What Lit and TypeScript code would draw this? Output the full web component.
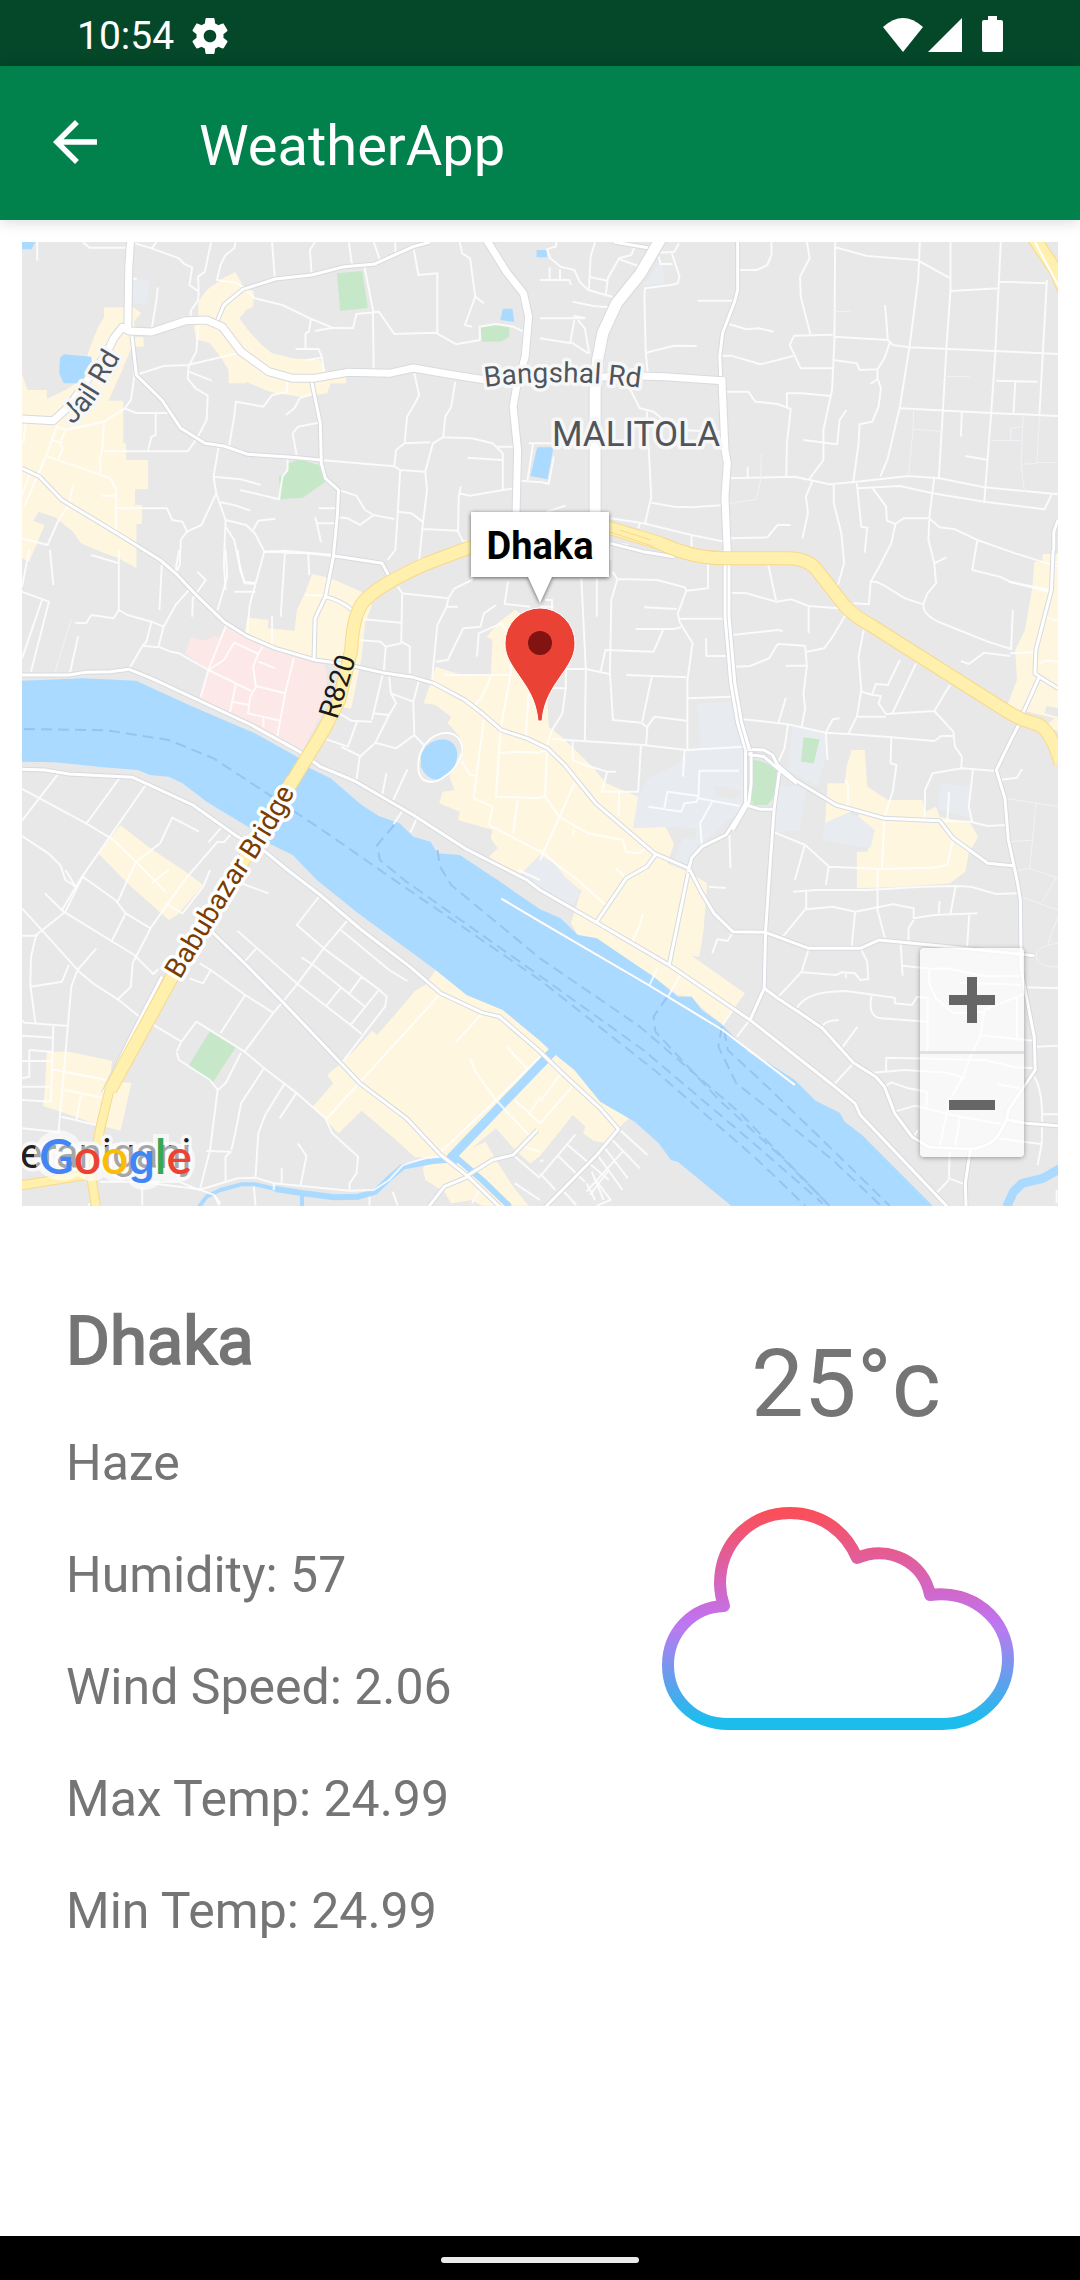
import { LitElement, html, svg, css } from "lit";
import { customElement, property } from "lit/decorators.js";

interface Layer {
  cls: string;
  d: string;
  dx?: number;
  dy?: number;
}

const COL = 1568;
const ROW = 960;

const areas: Layer[] = [
  { cls: "shop", d: "M302 232H388L410 250 390 272V322H417V350H383L355 420 315 512H358V640H366V690H430V778H392V825H412V882H396V1015L345 985 300 968 235 940 212 905 160 862 112 845 96 872 130 885 105 945 85 995 64 985V432L80 480H136V507L190 480 250 440 255 370 285 290 302 262Z" },
  { cls: "shop", d: "M576 215L600 180 650 143 684 126 704 165 738 185 735 230 715 240 695 265 720 300 760 345 790 370 850 385 930 390 950 430 1005 440V460H960L950 490 880 502 840 495 800 490 770 480 715 455 714 460H664V420L640 380 610 340 570 328 562 288 576 270Z" },
  { cls: "water", d: "M64 36H102L92 58H64ZM185 373L265 380 268 410 250 460H185L172 430 174 385ZM1460 236H1488L1493 276 1453 270ZM1558 60H1588V82H1558ZM1560 652H1607L1590 748 1540 738Z" },
  { cls: "campus", d: "M386 148H432L428 222H386ZM1923 90L1930 160 1868 165Z" },
  { cls: "park", d: "M978 130L1052 123 1068 234 988 243ZM1395 290L1440 284 1480 290 1478 320 1455 335 1400 335ZM838 700L870 688 925 705 945 755 880 803 815 808 810 740 835 725Z" },
  { cls: "clinic", dy: ROW, d: "M655 230L720 265 850 320 945 345 950 400 930 500 880 600 800 560 700 510 583 445 605 360 537 310 555 262 595 272 622 258 635 265Z" },
  { cls: "shop", dy: ROW, d: "M907 72L960 85 1050 125 1080 165 1060 220 1050 320 1020 475 980 470 985 345 915 325 850 315 780 285 712 245 718 202 780 210 778 235 855 242 862 180 885 130Z" },
  { cls: "shop", d: "M1265 1310L1340 1335 1425 1338 1430 1230 1413 1220 1450 1175 1495 1140 1560 1180 1590 1410 1593 1490 1630 1520 1720 1610 1760 1660 1853 1700 1843 1785 1933 1790 1958 1840 1938 1900 1998 1925 2053 1960 2043 2100 2031 2180 2008 2177 2163 2290 2098 2383 2038 2335 2008 2300 1968 2295 1898 2240 1768 2155 1733 2125 1678 2115 1658 2080 1688 1980 1568 1935 1505 1945 1420 1880 1445 1855 1425 1825 1430 1800 1330 1770 1335 1745 1275 1720 1285 1685 1320 1680 1305 1640 1340 1560 1335 1520 1300 1480 1310 1460 1265 1425 1230 1420 1250 1360Z" },
  { cls: "campus", d: "M1568 1875L1610 1900 1640 1940 1690 1985 1660 2025 1568 1980 1500 1945Z" },
  { cls: "shop", d: "M350 1785L430 1850 545 1930 590 1965 515 2055 490 2070 375 1965 285 1870Z" },
  { cls: "shop", dy: ROW * 2, d: "M136 545H200L325 572 320 635 382 638 350 782 285 765 220 740 125 708 130 660Z" },
  { cls: "shop", dy: ROW * 2, d: "M1265 300L1235 345 1205 362 1175 400 1095 495 1080 482 1035 535 995 575 950 615 968 640 908 710 983 790 1050 722 1150 810 1205 862 1250 865 1228 895 1235 930 1290 965 1310 1000 1370 990 1400 1007H1535L1490 950 1440 870 1410 815 1370 835 1440 775 1500 845 1540 880 1568 858 1640 765 1663 735 1700 770 1693 790 1723 812 1753 818 1830 740 1743 695 1668 600 1600 545 1568 512 1460 420 1355 375Z" },
  { cls: "park", dy: ROW * 2, d: "M610 483L685 532 618 637 547 588Z" },
  { cls: "shop", dx: COL, dy: ROW, d: "M1460 12H1504V545L1470 525 1495 505 1355 470 1385 390 1380 300 1408 240 1430 110 1435 35 1458 34Z" },
  { cls: "shop", dx: COL, dy: ROW, d: "M905 600H943L950 710 1010 750 1110 750 1120 785 1150 770 1160 800 1250 820 1272 860 1245 910 1235 965 1190 1000 1040 1010 920 1015V905H950L970 840 925 825V780L890 790V820H828L835 700H885L890 650Z" },
  { cls: "campus", dx: COL, dy: ROW, d: "M457 460L553 457 575 520 590 590 600 760 560 800 490 862 470 880 440 930 430 960 385 945 420 850 400 830 270 835 285 740 315 685 405 640 422 600 468 595ZM735 530L830 550 832 620 805 708 718 660ZM690 708H772L755 840 682 845ZM825 820L890 790 925 800 972 840 960 893 900 885 822 870ZM1165 700L1248 710V805L1155 775Z" },
  { cls: "park", dx: COL, dy: ROW, d: "M765 562L812 568 795 640 758 635ZM617 630Q650 630 688 660L680 740 660 765 620 765 612 740Z" },
  { cls: "land", dx: COL, dy: ROW, d: "M1470 468L1504 475V500L1466 490ZM505 710L545 712 590 725 560 750 510 735ZM365 830L400 832 455 835 450 870 410 860 385 900 388 880Z" },
  { cls: "water", d: "M64 1352L240 1345 395 1352 560 1430 740 1510 870 1585 900 1615 960 1645 1050 1725 1100 1758 1160 1780 1200 1820 1250 1835 1270 1870 1335 1875 1445 1950 1568 2038 1628 2065 1678 2115 1733 2125 1898 2240 1968 2300 2008 2300 2038 2340 2098 2385 2178 2470 2218 2490 2308 2550 2368 2612 2438 2648 2453 2675 2503 2715 2708 2927H2123L1968 2795 1948 2790 1913 2740 1843 2675 1743 2615 1668 2520 1603 2465 1568 2432 1460 2340 1355 2295 1265 2220 1040 2050 920 1950 850 1875 780 1840 720 1790 600 1715 530 1660 490 1640 435 1635 400 1620 300 1612 160 1597 64 1595Z" },
  { cls: "water", dy: ROW, d: "M1222 620Q1235 570 1290 568 1328 575 1328 620 1320 668 1285 685 1245 700 1222 650Z" },
];

const canals: Layer[] = [
  { cls: "canal-wide", dy: ROW * 2, d: "M1605 545L1310 862L1330 875" },
  { cls: "canal", dy: ROW * 2, d: "M1310 850L1400 930 1480 1010M1320 868L1265 872 1170 890 1130 925 1090 965 1040 980 970 982 880 970 800 957" },
  { cls: "canal-thin", dy: ROW * 2, d: "M800 957L740 943H700L640 960 600 980 578 1010M877 970V1008" },
  { cls: "canal-wide", dx: COL, dy: ROW * 2, d: "M1515 893L1460 925 1400 940 1375 965 1355 1010" },
];

const ferries: Layer[] = [
  { cls: "ferry", d: "M70 1497L310 1501 490 1530 620 1585 790 1700 950 1810 1110 1925 1568 2250 1900 2520 2200 2790 2338 2927" },
  { cls: "ferry", d: "M1145 1785L1095 1845 1103 1890 1180 1955 1568 2238 1868 2460 2200 2750 2388 2920" },
  { cls: "ferry", d: "M1270 1860L1278 1910 1310 1965 1568 2185 1858 2390 2150 2650 2408 2927" },
  { cls: "ferry", dx: COL, dy: ROW * 2, d: "M370 380L330 440 335 485 520 690 700 860 840 1007M528 470L518 530 570 640 700 745 850 870 990 1007M535 480L545 540 660 650 830 820 1015 1007" },
];

const lanes: Layer[] = [
  { cls: "lane", d: "M108 36V92M240 36L260 53H375M455 36L440 55M392 40L440 55 520 85 535 102 558 112 550 165 577 185 575 212 555 240 553 262M613 36L595 125 575 140 577 185M684 36L680 55 655 75 640 105 630 150 690 160 740 205 820 225 900 265 965 293 1025 295 1035 252 1100 245 1145 312 1265 308 1325 343 1393 330V290L1440 282 1490 290 1530 310M790 36L798 145M915 36L900 60 905 133M1013 36L1022 105M1085 36L1105 95M1148 36V75M1200 50L1215 135 1270 130V308M1335 36L1342 70 1365 85 1380 200 1350 285 1370 290M1380 200L1405 220M1058 110L1083 240 1085 425M903 265L897 305 887 310V355M858 357H925L935 382 940 425M890 390L935 383M915 303L965 293" },
  { cls: "lane", d: "M458 172L455 205 440 300M380 146H397M577 280L570 365 548 408 545 445 568 475 603 497 600 570 572 625 545 664H300M400 433L475 408 545 405 690 370M548 425L615 452M385 320L390 440 380 510 362 535 302 575 190 600 165 590 135 675 70 830M362 535L395 549H490M452 549V615L440 620 430 660M302 575L297 655 290 690 292 730M140 680L280 730 320 745 337 780V905M295 797H337M75 575L68 640M212 765L200 825 170 870 138 945 64 925M85 735L64 795M190 600L175 640 182 655 170 685M150 628L178 640M340 835H485L500 870 530 875 543 905" },
  { cls: "lane", d: "M635 650L620 740 628 790 585 885 543 905 525 930 522 1005 510 1030M620 740L700 748 757 765M628 790L655 870 650 1000 655 1080M640 817L680 825 727 842M655 870L715 885 740 910 768 965 825 962 970 975M735 900L750 872 800 866M655 890L680 930 692 990 710 1060 740 1062M697 780L810 808 820 740 835 720V685M835 452L833 485 790 495 765 530 685 515 680 560 665 650M910 490L870 505 855 535 830 555M925 578L865 590 850 610 862 680M930 690L1145 709 1162 720 1235 725 1257 640 1285 622 1370 625 1430 640 1460 670V780L1365 797 1332 790M1357 683L1458 690M1145 709L1150 660 1175 640 1250 637M1203 430L1217 495 1205 520 1182 560 1175 640M1322 455L1310 530 1293 560 1287 622M1460 780L1498 775M1235 725L1240 780 1228 880 1217 990M1162 720L1155 850 1148 960 1125 990M983 780L1035 797 1060 840 1085 855 1145 867M980 862L1010 865 1045 885 1085 855M1155 845L1195 850 1230 877M1228 897L1330 902M1338 770L1332 800 1330 905 1345 935 1370 930M925 835H980M915 862L920 880H975M920 880L932 937M1445 650H1498M1535 640L1568 640M1512 752L1568 757M1548 640L1532 750" },
  { cls: "lane", dx: COL, d: "M48 36L45 50 20 58 30 85 60 110 100 120 115 155 140 180 210 200M160 36L147 80 142 180M0 150H85L90 165M28 112V150M58 118V150M142 140L195 152M190 200L197 145 230 85 265 75 275 50M232 88L285 108M95 215L155 228 200 232M0 265H130M97 258L132 264M100 270L88 335 140 370M110 270L130 295 143 370M0 325L90 340M403 40L390 65 350 68M345 80L350 102H385M383 70L405 140 400 160 380 165 305 175 303 200 307 365 313 430M307 368L390 347 455 348M262 478L290 535 330 545 370 580 400 600 525 605M310 545L323 800 305 880M323 818L390 830 440 832 525 826M0 640H45M0 755L25 762 40 680M20 845L75 827" },
  { cls: "lane", dx: COL, d: "M672 36V75L660 105 630 120H580M458 212H565M550 283L600 298 635 295 678 305M775 36L783 85 755 140 757 200 785 312M857 36L855 330 848 480 823 600V690L780 750M857 52L950 78 1095 90 1192 145M1103 36L1098 150 1073 350 1045 530 1010 685 988 740M1192 36V180L1180 355 1170 540 1158 745M1192 183L1332 175M1338 36L1322 370 1310 550 1290 815M1335 155L1470 160M1472 150L1460 370 1450 555M855 320L1010 330 1025 345 1073 352 1320 363 1504 372M1002 225L1010 330M850 314L738 317 725 345 757 415H850M525 377H555L640 403 735 378M852 390L920 400 928 420 980 418 1000 385 1015 340M980 418V445L990 475 983 530 965 575 928 583 925 640 910 755M960 462L980 447M540 485H605L625 515 690 522 728 537 717 640 715 740M717 530V490L760 490 845 498M765 630L863 643 870 570 890 540M1045 535L1310 549 1504 558M1225 545L1222 620M1235 678L1302 690M1325 452L1445 455M1380 453L1375 550" },
  { cls: "lane", dx: COL, d: "M545 745L740 740 840 763 920 755 1070 738 1160 745 1290 772 1504 793M603 710V742M790 755L772 800 778 850 762 925M853 762V820L875 910 883 1000 865 1065M920 760L933 890 950 893 943 968M922 775L1045 768 1140 790 1290 815 1465 838 1485 795M965 773L1005 830 1007 872 1032 882 1020 940 985 1010 960 1055M1032 882L1055 865H1130L1145 740M1130 865L1160 892 1205 898 1270 930 1380 970 1504 1010M1130 870L1128 930 1145 1000M1270 930L1255 1020 1335 1040 1365 1055 1480 1080M550 925L660 922 690 885H728M205 865L300 880 440 915 535 935M440 915V950M285 895L290 880M205 940V990M205 938L256 945" },
  { cls: "lane-faint", dx: COL, d: "M853 245H900M1175 440H1247M1085 537L1083 600 1070 740M1083 597L1168 605M643 672L640 755 628 808 540 822M1403 558L1397 705 1407 785M1310 632H1397M1367 632V595L1400 590M1450 560L1443 700 1400 703M1443 698H1500" },
  { cls: "lane", dy: ROW, d: "M265 15L345 40M345 0V180L370 195 440 215 475 230 510 165 548 120M345 180L330 205 265 195 250 220 218 218M440 215L425 275 412 290 375 357M475 230L460 290 495 305 520 310 605 360 730 423M412 287L460 292M470 40L463 180M520 0L510 60M573 65L597 90 560 145 558 200M64 125L142 155 90 365M122 150L64 325M227 258L203 370M145 0L155 105M85 0L64 110M655 0L660 80 632 180M690 0L697 60 710 95 745 100M680 125H742M768 3L725 165 718 250M828 0L815 200M765 5L895 10 1110 35M895 10L898 75M790 198V285M885 135L945 137M1155 110L1168 130 1165 275 1190 290V370M1165 130L1302 145 1297 170 1270 225 1257 360 1255 390M1302 145L1320 115 1370 90V0M1297 170H1330M1055 208L1165 218M1043 270L1105 275 1120 290 1115 360M1120 290L1165 280" },
  { cls: "lane", dy: ROW, d: "M1113 365L1080 510M1130 380L1135 430 1200 455 1217 390M1135 430L1150 460 1130 495 1090 578 1045 620M1082 490L1130 495M985 490L1020 512 1080 515M1038 512L1010 590 940 565M990 590L1045 618 1035 690M1200 455L1203 555 1230 585M1090 578L1150 595 1203 555M1265 335L1300 330 1345 235 1395 230 1405 190 1440 165M1465 165L1475 95M1465 162L1540 170M1385 320L1390 250 1455 220 1485 260 1483 370 1453 540M1290 375L1483 375M1425 380L1400 440 1375 470M1340 635L1365 675 1385 678M1405 510L1375 745 1430 770 1420 825 1568 905M1453 545L1440 740 1568 745M1450 610L1495 605 1568 608M1535 430L1527 555M1503 750L1490 850M1183 658L1142 750M1122 670L1110 735M1170 780L1143 822M1210 805L1192 847" },
  { cls: "lane", dy: ROW, d: "M657 225L605 360 583 440M605 360L650 330 680 278 750 312 762 290M750 312L735 350 743 410 727 440 720 490 815 512M743 408L828 430M853 325L828 430 805 560M685 402L667 490M675 455L722 465M765 500V530M750 335L800 355M64 717L250 820 330 870 395 935 480 1025M170 670L64 812M350 680L250 822M423 705L235 985 180 1080M64 858L140 910 175 945 190 990 220 1010M578 845L500 803 465 880 395 935 370 990 340 1060M605 877L645 830M672 850L650 877 632 875 540 985 440 1130 385 1240 380 1310 340 1350M780 1030L700 1000" },
  { cls: "lane-faint", dy: ROW, d: "M207 207L160 365" },
  { cls: "lane", dy: ROW * 2, d: "M240 20L190 125 105 195 90 260 88 345 103 460M130 70L185 125 390 255 445 312 460 298M64 115L130 190 230 305 270 340 345 390 405 440M64 197H110M280 235L225 300 207 350 197 470 170 785M88 350L180 335 200 285M190 0L220 50M240 20L335 90 365 130 437 175M365 130L325 212M64 450L70 458 200 468M155 465L148 695 64 690M64 497L155 503M64 573H148M85 540V620L64 625M85 540L150 545M64 650H145M150 598L310 630M188 660L300 683M235 675L222 750M178 740L280 765M64 775L175 787M438 460L527 515M610 0L590 50 530 130 480 100M490 0L440 40M550 325L590 340 612 300 580 280M612 300L712 375 793 428M712 375L640 490M690 183L865 343 1018 465 1050 492M743 237L710 275M875 262L910 285 1060 410M1050 320L1015 370M990 353L947 408M930 75L862 165 940 235 1100 358 1123 380 1118 410 995 575M1100 360L1018 465M1010 150L940 235 865 340 793 430 710 545M990 180L1130 300 1183 333M640 1000L622 975 578 958 405 935" },
  { cls: "lane", dy: ROW * 2, d: "M513 545L527 515 570 455 710 545 770 597 860 668 945 745 965 790 1040 860 1035 910 1015 940V962M513 548L520 570 610 630 632 660 625 715 610 840 580 960M700 548L655 640 632 660M765 597L700 700 685 780 672 840M825 643L770 735 750 790 742 920M860 670L812 745M290 935L520 935 578 960 690 925 742 923 795 940 1015 962 1085 960 1130 930 1170 885 1240 863 1280 860M600 843L670 845 655 860V935M865 820L890 858 873 945M818 895V938M795 940V960M737 950L742 1007M622 975L637 1007M1073 980V1007M1140 965L1155 1007M413 950V1007M255 1007L268 995M945 750L1280 370M1280 845L1440 690 1568 560M1400 430L1323 517M1365 565L1380 605 1440 690 1540 800M1470 530L1530 595M1495 690L1568 760M1568 845L1520 830M1490 855L1568 925M1495 940L1568 990M1365 930L1393 960 1370 1000M1568 680L1535 735M1505 0L1568 30" },
  { cls: "lane", dx: COL, dy: ROW, d: "M488 30V115L425 122 420 112 340 90 225 87 207 150 203 370 212 510 295 518 310 532 333 500 425 512M225 87L210 65M425 122L400 190 405 215 443 280 428 390V600M303 172L398 177M400 206H540M277 237H390L410 232M357 240L330 305 190 300 175 370M482 265L483 318H545M120 85L133 360 130 575M165 85L165 200M30 357H133L205 373M250 375L425 382M325 378L297 515M430 445L555 440M35 567L300 585 425 600 590 590M312 530L308 585M293 587L285 725 180 725 195 665 130 645 95 630V570M195 665H220M420 600L415 680M0 415H75L75 360M75 415L65 490 35 540 20 590M230 725L228 795M460 745L463 662H578M315 770L410 785 420 760 455 755 460 738 370 725 360 780M500 755L465 820 470 885M460 745L580 768M550 855L553 955" },
  { cls: "lane", dx: COL, dy: ROW, d: "M100 700L0 930M0 605L20 600 15 740 55 800 140 850 240 870 250 905 290 910 310 890M15 150H35V185M0 170H40M95 855L100 840M10 705H15M0 740H15M555 128L600 130 685 155 730 148 780 168 865 175M663 45L685 150M780 168V250M887 195L850 260 825 295 775 305M558 255L690 240 705 243M565 350L610 348 665 325 690 282 770 287 775 350 765 430 770 475 760 530M714 347H775M585 507L720 523 830 548 895 552 1020 562 1145 573 1165 558H1200M714 443L693 517M720 523L710 595 690 640M830 548L835 630M830 548L850 508 870 505M940 240L925 320 933 420 920 500 895 552M933 425L965 435 990 438 983 460 1005 492 1145 483 1190 405M965 432L975 402 1010 405 1045 330M920 500H1005M1092 340L1023 490M1145 483L1200 545 1205 590 1225 620 1223 655M910 160L955 163 960 95H975L1005 110 1060 145 1113 163 1125 130 1150 100 1145 40 1180 22M1113 163Q1110 200 1180 225L1300 275 1368 297 1373 180M1365 318L1290 308 1245 342 1222 333M1365 310L1437 307M1450 340L1470 332 1504 335M1360 95L1480 125M1465 200L1504 213M1490 35L1504 38" },
  { cls: "lane", dx: COL, dy: ROW, d: "M1020 562L1018 640 1035 645 1025 720 1000 805 993 955M887 690L895 710 893 768M1117 808L1118 720 1140 670 1225 655 1325 663M1257 660L1245 770 1255 815M1330 690L1385 683 1400 657M1188 725L1183 810M1160 812L1250 815 1300 828 1352 825M1200 865L1183 945 1140 953 993 957 840 950 770 885 680 847M768 888L740 990M838 952L830 1005M980 957V1080L1003 1170M735 1025L800 1020 950 1020 1110 1010 1207 1008 1250 1010 1325 1032 1390 1030M0 900L50 945 110 990 190 1065M220 955L250 985" },
  { cls: "lane-faint", dx: COL, dy: ROW, d: "M1352 745L1504 770M1440 760L1422 955M1365 875L1430 870M1385 962L1420 955 1504 985M1395 1040L1504 1080M1500 980L1460 1055M1504 1180Q1440 1185 1440 1220 1445 1250 1504 1252M1475 1180L1504 1100" },
  { cls: "lane", dx: COL, dy: ROW * 2, d: "M490 50L540 54M560 187L545 213 515 208 500 250M773 65V115L705 200M773 118L850 110 915 125 1025 103 1085 115V145L1145 135 1270 130M915 125L905 230M1085 150L1070 175V215M1160 93L1158 130M1207 48L1192 130M1247 130L1240 230M780 238L760 305 690 383M760 307L860 315 875 307 915 310 930 330 953 327 950 275 933 240M1047 218L1053 317M1053 287L1140 297 1180 295 1290 318H1400M888 310V325M745 415Q770 370 850 365L890 363 1030 383V400L1080 405 1095 380 1130 385M963 375Q950 440 990 445L1125 455M1130 300V340L1150 385 1200 430 1290 425M1125 390V550M818 470Q830 450 868 450M922 470L878 532M910 580L852 645M1005 605V563L1290 570 1380 592 1440 595M965 608L1060 600 1180 608 1235 625M1225 630L1250 560 1280 495 1290 420 1410 370M1280 495L1435 513M1410 352L1504 355M1440 530L1504 527M1000 650L1020 637 1070 655 1125 665 1122 710M1225 625L1190 690 1160 830M1030 725L1090 707 1220 740 1355 765M1220 740L1205 830M1325 805L1460 823M1435 620Q1460 660 1458 760L1457 820 1445 885M1460 733H1504M1190 845L1187 925 1235 943M1187 930L1150 970M1085 800L1097 780M1500 960V1000M1218 338L1400 345M1330 643L1395 655M1385 380V510" },
  { cls: "lane", dx: COL, dy: ROW * 2, d: "M298 132L290 165 268 213M340 297L318 345M407 315L373 378M560 420L530 465M605 455L572 500M60 612L0 695M93 650L0 760M230 778L312 855M210 810L290 895M185 830L255 925M170 860L240 960M150 905L185 990M135 940L160 990M165 1007L205 990 165 935M65 960L105 1005M0 910L45 960M50 855L130 935M77 822L200 930M103 793L0 920M240 845L135 965M200 900L145 975M0 875L10 870" },
];

const streets: Layer[] = [
  { cls: "street", d: "M630 275L650 225 705 178 800 147 905 135 1000 110 1085 103 1200 50 1250 36M1783 36L1890 55M905 455L930 580 933 700 945 745 983 780 980 850 968 980 945 1100 915 1165 912 1285M383 315L396 435 470 510 525 595 595 640 650 648 720 673 850 682 930 690M945 1100Q990 1110 1022 1140M968 977L1110 1000 1130 1040M64 715L115 740 180 810 340 910 465 990 510 1030 570 1095 650 1175 720 1220 800 1255 915 1290 1000 1302 1110 1328 1200 1342 1260 1360 1350 1410 1400 1450 1455 1500 1530 1525 1590 1555 1640 1605 1730 1720 1900 1870 2000 1915" },
  { cls: "street", d: "M64 1335H200L250 1327 320 1325 375 1318 440 1345 730 1485 870 1565 930 1610 1030 1653 1200 1755 1350 1855 1530 1950 1568 1980 1728 2075 1943 2205 2178 2370 2418 2565 2483 2620 2498 2655 2755 2935M64 1618L130 1620 200 1632 385 1642 430 1663 560 1725 690 1820 770 1865 835 1920 930 1995 1050 2100 1190 2210 1280 2290 1400 2348 1450 2360 1568 2465 1633 2530 1743 2635 1796 2698 1733 2775 1580 2935M580 2070L720 2210 820 2315 1045 2560 1180 2665 1280 2775 1360 2840 1450 2930M1360 2840L1290 2870 1245 2930M1360 2835L1430 2790 1490 2775 1560 2700M300 2590L400 2380 470 2240" },
  { cls: "street", dx: COL, d: "M574 36V180L565 215 530 310 522 380 525 450M205 940L300 965 390 980M1504 870L1492 905V960" },
  { cls: "street", dx: COL, dy: ROW, d: "M597 590V760L575 800 540 855 470 890 440 925 430 965M613 605V700L607 755 560 840M600 598L650 600 675 615 690 645 740 690 860 765 1000 805 1160 812 1200 865 1300 940 1380 948M605 612L650 620 690 655 745 700M695 665L680 775 665 990 655 1145 651 1315M600 765L640 778H675M335 915L310 950 250 985 165 1115M1490 0L1485 120 1440 300 1437 370 1450 380 1504 415M1450 380L1400 495M1390 525L1365 575 1325 660 1350 745 1360 870 1385 990 1395 1050 1397 1260 1435 1460 1438 1560 1360 1680 1355 1710 1325 1765Q1290 1795 1250 1797L1130 1792 1080 1760 1030 1690 1000 1610 975 1580 910 1538 820 1435 750 1385 690 1345 651 1315 610 1410M1250 1797L1235 1900 1237 1970M1360 1710L1410 1720 1504 1727M435 960L470 1030 505 1090 560 1145 655 1147 780 1195H930L985 1170 1200 1192 1435 1217M430 970L375 1245" },
  { cls: "ring", dy: ROW, d: "M1232 585Q1260 548 1300 548 1345 555 1343 610 1325 660 1290 680 1260 705 1230 690 1205 670 1220 610Z" },
  { cls: "pier", dx: COL, dy: ROW * 2, d: "M-112 86L0 155 315 345 530 480 740 645" },
];

const roads: Layer[] = [
  { cls: "road", d: "M380 20L374 110 371 300M64 567L155 572 200 530 260 440 310 370 330 325 355 292 375 303 440 306 540 272 600 270 645 290 700 365 780 425 850 445 910 445 1010 427 1130 430 1200 414 1300 432 1410 450 1858 438 1930 440 2098 452M1410 25L1470 125 1520 190 1535 260 1525 380 1500 470 1490 530 1503 660 1498 870M2096 442L2105 660 2112 700 2105 800 2112 970" },
  { cls: "road", dx: COL, dy: ROW, d: "M543 0V200L560 400 580 520 603 600" },
  { cls: "avenue", d: "M1922 20L1860 130 1790 220 1750 310 1735 390 1728 480V870" },
];

const highways: Layer[] = [
  { cls: "highway", d: "M840 1670L940 1500 985 1410 1020 1260Q1025 1140 1065 1105 1110 1060 1240 1000L1370 950Q1568 850 1768 893L1918 940Q2010 985 2108 985H2288Q2340 985 2368 1015L2455 1130Q2490 1165 2528 1185L2918 1440Q2940 1455 2968 1468L3018 1485Q3055 1510 3080 1600" },
  { cls: "highway", d: "M850 1650L500 2240 320 2580" },
  { cls: "highway-slim", d: "M320 2570L290 2700 265 2840 280 2940M50 2868L250 2835" },
  { cls: "highway", dx: COL, d: "M1425 10L1500 125 1530 200" },
];

const place = (l: Layer) =>
  svg`<path class=${l.cls} d=${l.d} transform="translate(${l.dx ?? 0} ${l.dy ?? 0})"></path>`;

const cased = (layers: Layer[]) => svg`
  <g class="casing">${layers.map(place)}</g>
  <g>${layers.map(place)}</g>`;

@customElement("status-bar")
class StatusBar extends LitElement {
  static styles = css`
    :host {
      display: flex;
      align-items: center;
      height: 66px;
      padding: 0 77px;
      background: #044729;
      color: #fff;
      font-size: 39px;
      line-height: 44px;
    }
    .time { margin-right: 18px; padding-top: 6px; }
    .gear { width: 36px; height: 36px; margin-top: 5px; }
    .signals { width: 120px; height: 38px; margin-left: auto; margin-top: 4px; }
  `;
  render() {
    return html`
      <span class="time">10:54</span>
      <svg class="gear" viewBox="2 2 20 20" fill="#fff" aria-hidden="true">
        <path d="M19.43 12.98c.04-.32.07-.64.07-.98s-.03-.66-.07-.98l2.11-1.65c.19-.15.24-.42.12-.64l-2-3.46c-.12-.22-.39-.3-.61-.22l-2.49 1c-.52-.4-1.08-.73-1.69-.98l-.38-2.65C14.46 2.18 14.25 2 14 2h-4c-.25 0-.46.18-.49.42l-.38 2.65c-.61.25-1.17.59-1.69.98l-2.49-1c-.23-.09-.49 0-.61.22l-2 3.46c-.13.22-.07.49.12.64l2.11 1.65c-.04.32-.07.65-.07.98s.03.66.07.98l-2.11 1.65c-.19.15-.24.42-.12.64l2 3.46c.12.22.39.3.61.22l2.49-1c.52.4 1.08.73 1.69.98l.38 2.65c.03.24.24.42.49.42h4c.25 0 .46-.18.49-.42l.38-2.65c.61-.25 1.17-.59 1.69-.98l2.49 1c.23.09.49 0 .61-.22l2-3.46c.12-.22.07-.49-.12-.64l-2.11-1.65zM12 15.5c-1.93 0-3.5-1.57-3.5-3.5s1.57-3.5 3.5-3.5 3.5 1.57 3.5 3.5-1.57 3.5-3.5 3.5z"></path>
      </svg>
      <svg class="signals" viewBox="0 0 120 38" fill="#fff" aria-hidden="true">
        <path d="M0 11Q20-7 40 11L20 36Z"></path>
        <path d="M79 2V36H45Z"></path>
        <path d="M105 0h9v4h4a2 2 0 0 1 2 2v28a2 2 0 0 1-2 2h-17a2 2 0 0 1-2-2V6a2 2 0 0 1 2-2h4z"></path>
      </svg>
    `;
  }
}

@customElement("city-map")
class CityMap extends LitElement {
  static styles = css`
    :host { display: block; position: relative; }
    .map { display: block; width: 100%; height: auto; background: #e8e8e8; }
    .sheet path { vector-effect: non-scaling-stroke; fill: none; stroke-linejoin: round; }
    .sheet .shop { fill: #fef6df; }
    .sheet .water { fill: #aadaff; }
    .sheet .park { fill: #c6e8c8; }
    .sheet .campus { fill: #e8ecf0; }
    .sheet .clinic { fill: #fce8e6; }
    .sheet .land { fill: #e8e8e8; }
    .canal { stroke: #aadaff; stroke-width: 6px; }
    .canal-thin { stroke: #aadaff; stroke-width: 4px; }
    .canal-wide { stroke: #aadaff; stroke-width: 9px; }
    .ferry { stroke: #97c3f1; stroke-width: 2px; stroke-dasharray: 11 6; }
    .lane { stroke: #fff; stroke-width: 2px; stroke-opacity: 0.8; }
    .lane-faint { stroke: #f0f3f7; stroke-width: 1px; }
    .street { stroke: #fff; stroke-width: 3px; }
    .pier { stroke: #fff; stroke-width: 2px; }
    .ring { stroke: #fff; stroke-width: 2px; }
    .road { stroke: #fff; stroke-width: 7px; }
    .avenue { stroke: #fff; stroke-width: 11px; }
    .highway { stroke: #fff0ae; stroke-width: 12px; }
    .highway-slim { stroke: #fff0ae; stroke-width: 8px; }
    .casing path { stroke: #d7dade; }
    .casing .street { stroke-width: 5px; }
    .casing .ring, .casing .pier { stroke-width: 2px; }
    .casing .road { stroke-width: 9px; }
    .casing .avenue { stroke-width: 13px; }
    .casing .highway { stroke: #f9d98a; stroke-width: 14px; }
    .casing .highway-slim { stroke: #f9d98a; stroke-width: 10px; }
    .lane-center { stroke: #fff; stroke-width: 2px; }
    .split { stroke: #d7dade; stroke-width: 1px; }
    .median { stroke: #f9d98a; stroke-width: 1px; }
    text { font-family: Roboto, "Liberation Sans", sans-serif; }
    .label {
      font-size: 28px;
      fill: #50555c;
      stroke: #f7f7f7;
      stroke-width: 7px;
      stroke-linejoin: round;
      paint-order: stroke;
    }
    .district { font-size: 35px; }
    .bridge { fill: #7a3c00; stroke: #fff; }
    .route { fill: #1a1a1a; stroke: none; }
    .town { font-size: 42px; fill: #202124; }
    .callout-text { font-size: 38px; font-weight: 700; fill: #000; }
    .callout { fill: #fff; filter: drop-shadow(0 1px 2px rgba(0, 0, 0, 0.6)); }
    .logo { font-family: Lato, Inter, sans-serif; font-size: 48px; font-weight: 600; }
    .logo-g { font-family: Inter, sans-serif; font-size: 42px; font-weight: 600; }
    .halo { fill: #fff; opacity: 0.6; }
    .blue { fill: #4285f4; }
    .red { fill: #ea4335; }
    .amber { fill: #fbbc05; }
    .green { fill: #34a853; }
    .zoom {
      position: absolute;
      right: 34px;
      bottom: 49px;
      width: 104px;
      background: rgba(255, 255, 255, 0.7);
      border-radius: 4px;
      box-shadow: 0 1px 5px rgba(0, 0, 0, 0.35);
    }
    .zoom button {
      display: flex;
      align-items: center;
      justify-content: center;
      width: 100%;
      height: 103px;
      padding: 0;
      border: 0;
      background: none;
    }
    .zoom button + button { border-top: 3px solid rgba(215, 215, 215, 0.7); height: 106px; }
    .zoom svg { width: 46px; height: 46px; }
  `;

  render() {
    return html`
      <svg class="map" viewBox="22 242 1036 964" role="img" aria-label="Map of Dhaka">
        <defs>
          <path id="bangshal" d="M485 387Q560 377 642 388"></path>
          <path id="jail" d="M72 425Q94 406 104 385L127 346"></path>
          <path id="bridge" d="M180 980L238 884Q273 836 299 784"></path>
        </defs>
        <g class="sheet" transform="translate(0 230) scale(0.34439 0.33333)">
          ${areas.map(place)} ${canals.map(place)} ${ferries.map(place)}
          ${lanes.map(place)} ${cased(streets)} ${cased(roads)}
          <path class="split" d="M2111 1000V1160L2128 1360 2148 1480 2170 1560"></path>
          ${cased(highways)}
          <path class="median" d="M1768 905L1900 950M1800 900L1890 930"></path>
          <path class="lane-center" d="M3005 36L3072 165"></path>
        </g>
        <text class="label"><textPath href="#bangshal">Bangshal Rd</textPath></text>
        <text class="label district" x="552" y="446">MALITOLA</text>
        <text class="label"><textPath href="#jail">Jail Rd</textPath></text>
        <text class="label route" x="337" y="720" transform="rotate(-73 337 720)">R820</text>
        <text class="label bridge"><textPath href="#bridge">Babubazar Bridge</textPath></text>
        <text class="label town" x="20" y="1168">eraniganj</text>
        <g class="halo">
          <path d="M34 1155A25 25 0 0 1 76 1137L82 1146Q92 1140 104 1148 118 1138 130 1147 140 1140 153 1144V1134H169V1146Q190 1138 195 1156 197 1180 178 1182L160 1180Q158 1190 142 1190 128 1188 128 1178 114 1186 104 1177 92 1186 78 1176 66 1184 50 1178 34 1172 34 1155Z"></path>
        </g>
        <text class="logo" x="39" y="1174"><tspan class="blue">G</tspan><tspan class="red">o</tspan><tspan class="amber">o</tspan><tspan class="blue logo-g">g</tspan><tspan class="green">l</tspan><tspan class="red">e</tspan></text>
        <path class="callout" d="M471 512H609V577H552L540 603 528 577H471Z"></path>
        <text class="callout-text" x="540" y="559" text-anchor="middle">Dhaka</text>
        <path fill="#ea4335" stroke="#fff" stroke-width="1" d="M505 643A35 35 0 0 1 575 643C575 655 570 662 565 670C554 686 544 698 542 721H538C536 698 526 686 515 670C510 662 505 655 505 643Z"></path>
        <circle cx="540" cy="643" r="12" fill="#811411"></circle>
      </svg>
      <div class="zoom">
        <button type="button" aria-label="Zoom in">
          <svg viewBox="0 0 46 46" fill="#666"><path d="M18 0h10v18h18v10H28v18H18V28H0V18h18z"></path></svg>
        </button>
        <button type="button" aria-label="Zoom out">
          <svg viewBox="0 0 46 46" fill="#666"><path d="M0 17h46v10H0z"></path></svg>
        </button>
      </div>
    `;
  }
}

@customElement("weather-details")
class WeatherDetails extends LitElement {
  @property() city = "Dhaka";
  private facts = ["Haze", "Humidity: 57", "Wind Speed: 2.06", "Max Temp: 24.99", "Min Temp: 24.99"];

  static styles = css`
    :host {
      display: flex;
      justify-content: space-between;
      align-items: flex-start;
      padding: 94px 50px 0 66px;
      color: #757575;
    }
    .facts { display: flex; flex-direction: column; gap: 54px; }
    h2 {
      margin: 0;
      padding-top: 2px;
      font-size: 67px;
      line-height: 78px;
      font-weight: 400;
      -webkit-text-stroke: 2px #757575;
    }
    p { margin: 0; font-size: 50px; line-height: 58px; }
    .now { width: 368px; padding-top: 29px; }
    .temp { font-size: 94px; line-height: 110px; text-align: center; }
    .cloud { display: block; width: 352px; height: 226px; margin-top: 66px; }
  `;
  render() {
    return html`
      <div class="facts">
        <h2>${this.city}</h2>
        ${this.facts.map((f) => html`<p>${f}</p>`)}
      </div>
      <div class="now">
        <p class="temp">25°c</p>
        <svg class="cloud" viewBox="0 0 352 226" aria-label="Cloudy" role="img">
          <defs>
            <linearGradient id="sky" gradientUnits="userSpaceOnUse" x1="0" y1="6" x2="0" y2="220">
              <stop offset="0" stop-color="#fb4e58"></stop>
              <stop offset="0.5" stop-color="#c271ee"></stop>
              <stop offset="0.55" stop-color="#b97af0"></stop>
              <stop offset="0.98" stop-color="#1cbdec"></stop>
            </linearGradient>
          </defs>
          <path fill="none" stroke="url(#sky)" stroke-width="12" stroke-linejoin="round" d="M62 101A72 72 0 0 1 58 79C58 36 91 8 128 8C160 8 184 27 195 53C228 39 262 58 268 90C310 84 346 114 346 154C346 192 316 219 280 219H66C32 219 6 194 6 160C6 128 30 102 62 101Z"></path>
        </svg>
      </div>
    `;
  }
}

@customElement("app-root")
class AppRoot extends LitElement {
  static styles = css`
    :host {
      display: flex;
      flex-direction: column;
      min-height: 100vh;
      background: #fff;
      font-family: Roboto, "Liberation Sans", sans-serif;
    }
    .bar {
      display: flex;
      align-items: center;
      gap: 88px;
      height: 154px;
      padding: 0 39px;
      background: #01814c;
      color: #fff;
      box-shadow: 0 2px 14px rgba(0, 0, 0, 0.15);
    }
    .back {
      display: flex;
      align-items: center;
      justify-content: center;
      width: 72px;
      height: 72px;
      padding: 0 0 2px;
      border: 0;
      background: none;
    }
    .back svg { width: 66px; height: 66px; }
    h1 { margin: 0; font-size: 56px; line-height: 64px; font-weight: 400; padding-top: 6px; }
    main { flex: 1; }
    .map-box { padding: 22px 22px 0; }
    .nav {
      display: flex;
      align-items: center;
      justify-content: center;
      box-sizing: border-box;
      height: 44px;
      padding-top: 4px;
      background: #000;
    }
    .pill { width: 198px; height: 6px; border-radius: 3px; background: #ebebeb; }
  `;
  render() {
    return html`
      <status-bar></status-bar>
      <header class="bar">
        <button class="back" type="button" aria-label="Back">
          <svg viewBox="0 0 24 24" fill="#fff"><path d="M20 11H7.83l5.59-5.59L12 4l-8 8 8 8 1.41-1.41L7.83 13H20v-2z"></path></svg>
        </button>
        <h1>WeatherApp</h1>
      </header>
      <main>
        <div class="map-box"><city-map></city-map></div>
        <weather-details></weather-details>
      </main>
      <footer class="nav"><div class="pill"></div></footer>
    `;
  }
}
